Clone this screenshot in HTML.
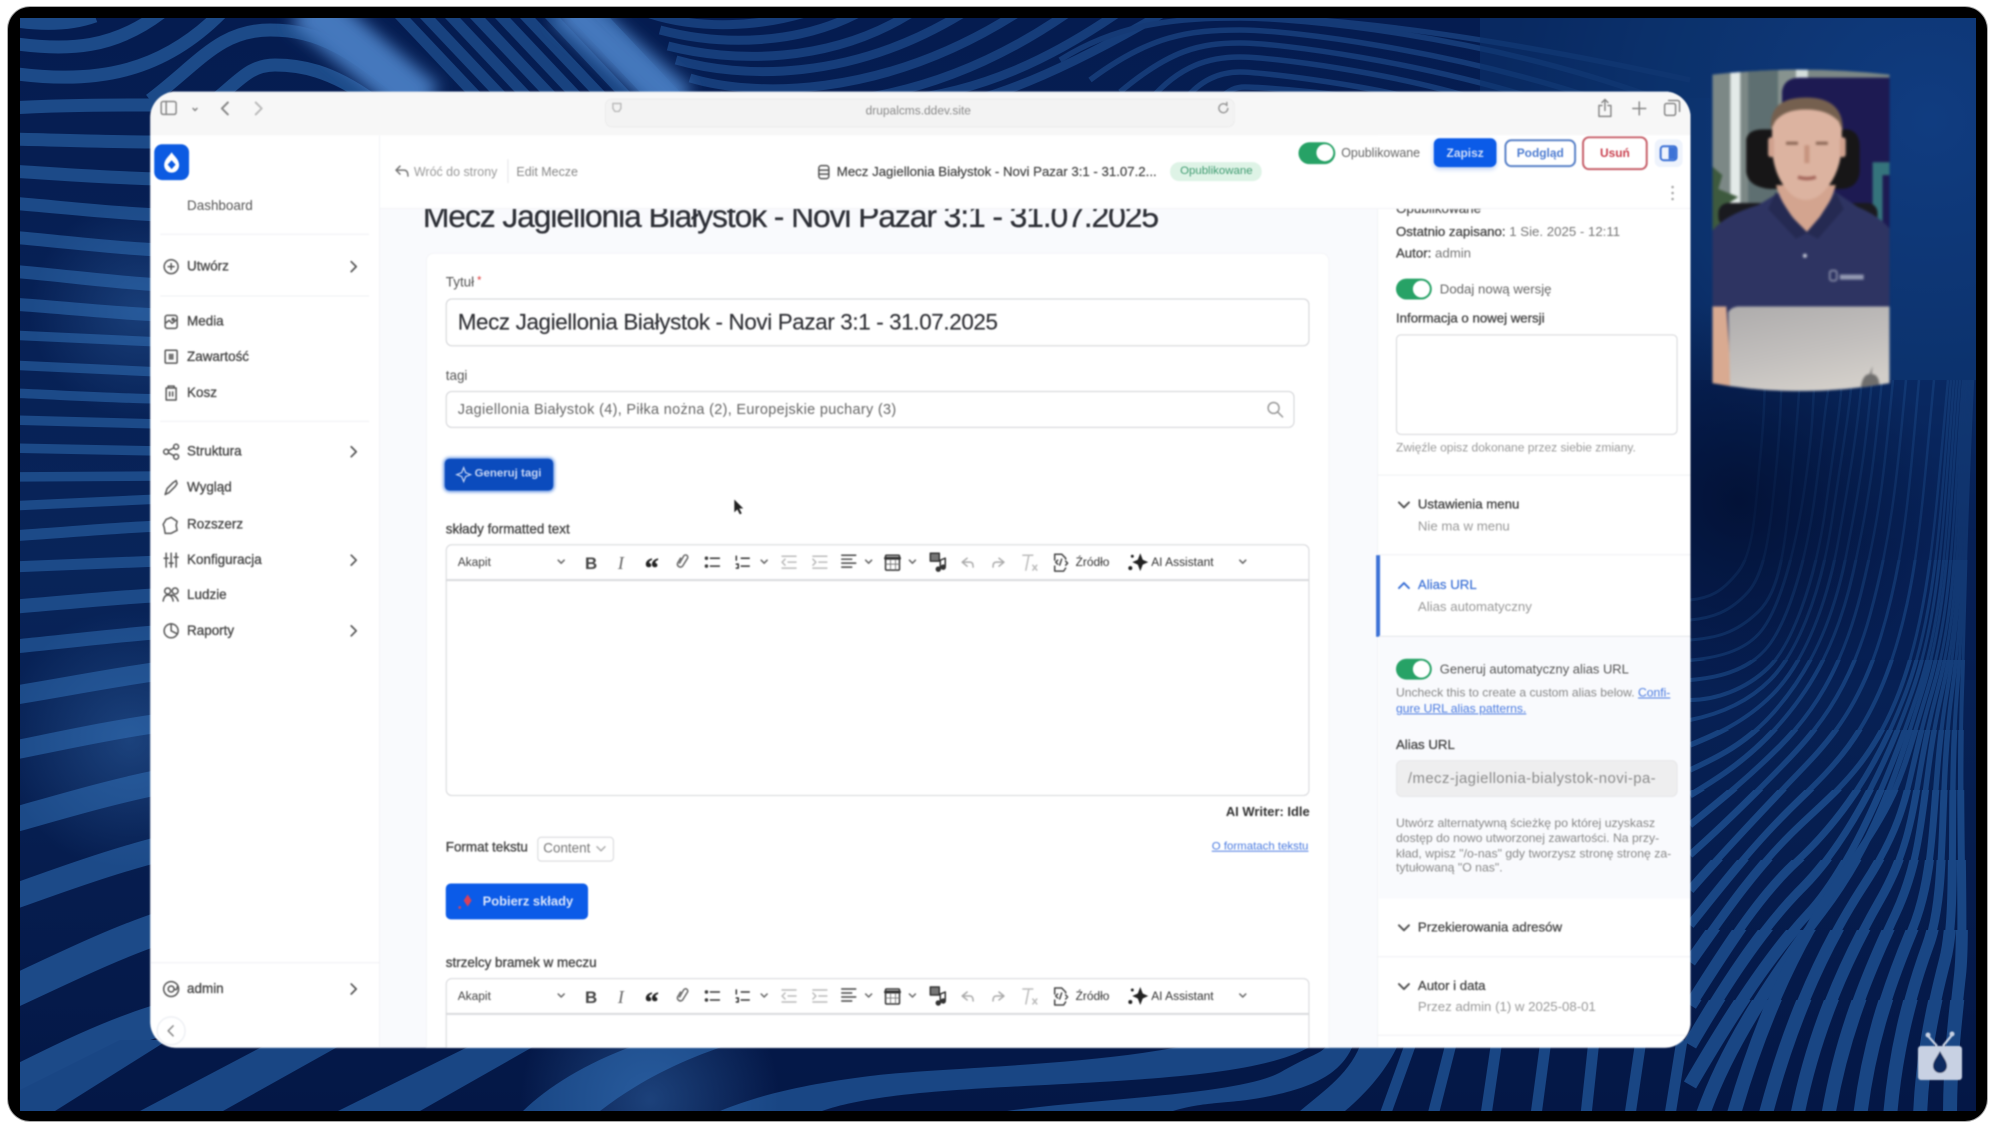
<!DOCTYPE html>
<html lang="pl"><head><meta charset="utf-8"><title>Drupal CMS</title>
<style>
html,body{margin:0;padding:0;width:1999px;height:1134px;background:#fff;overflow:hidden}
body{font-family:"Liberation Sans",sans-serif;position:relative}
.abs{position:absolute}
.frame{position:absolute;left:8px;top:7px;width:1979px;height:1114px;background:#000;border-radius:22px;box-shadow:0 0 0 1px #aaa}
#wrap{position:absolute;left:0;top:0;width:1999px;height:1134px;transform:scale(.995);transform-origin:0 0}
#win{position:absolute;left:151px;top:92px;width:1548px;height:961px;border-radius:26px;overflow:hidden;background:#fff;filter:blur(.7px)}
.c{position:absolute;left:-151px;top:-92px;width:1999px;height:1134px}
.t{position:absolute;line-height:20px;white-space:nowrap;font-size:13.500px;color:#444}
.b{font-weight:bold}
.g{color:#888}
.box{position:absolute;box-sizing:border-box}
.lab{color:#444;font-size:13.500px;-webkit-text-stroke:.3px #444}
.hr{position:absolute;height:1px;background:#eff0f3}
.tog{position:absolute;width:36px;height:21px;border-radius:11px;background:#27a266}
.tog:after{content:"";position:absolute;right:2px;top:2px;width:17px;height:17px;border-radius:50%;background:#fff}
.s{fill:none;stroke:#555;stroke-width:1.5;stroke-linecap:round;stroke-linejoin:round}
</style></head><body>
<div class="frame"></div>
<svg class="abs" style="left:20px;top:18px" width="1956" height="1093" viewBox="20 18 1956 1093">
<defs>
<linearGradient id="bg" x1="0" y1="0" x2="0" y2="1"><stop offset="0" stop-color="#051c50"/><stop offset=".5" stop-color="#082459"/><stop offset="1" stop-color="#041746"/></linearGradient>
<radialGradient id="gr" cx="1930" cy="120" r="430" gradientUnits="userSpaceOnUse"><stop offset="0" stop-color="#103c80"/><stop offset=".6" stop-color="#0c326d"/><stop offset="1" stop-color="#0c326d" stop-opacity="0"/></radialGradient>
<radialGradient id="gl1" cx="140" cy="310" r="110" gradientUnits="userSpaceOnUse"><stop offset="0" stop-color="#3a75bb" stop-opacity=".35"/><stop offset="1" stop-color="#3a75bb" stop-opacity="0"/></radialGradient>
<radialGradient id="gl2" cx="130" cy="740" r="130" gradientUnits="userSpaceOnUse"><stop offset="0" stop-color="#3a75bb" stop-opacity=".4"/><stop offset="1" stop-color="#3a75bb" stop-opacity="0"/></radialGradient>
<radialGradient id="gl3" cx="650" cy="1100" r="130" gradientUnits="userSpaceOnUse"><stop offset="0" stop-color="#3a75bb" stop-opacity=".45"/><stop offset="1" stop-color="#3a75bb" stop-opacity="0"/></radialGradient>
<radialGradient id="dk" cx="1740" cy="500" r="200" gradientUnits="userSpaceOnUse"><stop offset="0" stop-color="#020f30" stop-opacity=".8"/><stop offset="1" stop-color="#020f30" stop-opacity="0"/></radialGradient>
<filter id="sb" x="-30%" y="-30%" width="160%" height="160%"><feGaussianBlur stdDeviation="8"/></filter>
<filter id="sb1"><feGaussianBlur stdDeviation=".8"/></filter>
<g id="fam">
<path d="M1690 1085C1722 1030 1765 960 1808 914S1890 776 1918 692S1946 520 1957 380"/>
<path d="M1690 1045C1722 990 1760 930 1802 888S1883 774 1912 692S1943 520 1954 380"/>
<path d="M1690 1005C1721 957 1755 900 1796 862S1876 772 1906 692S1940 520 1951 380"/>
<path d="M1690 962C1720 920 1750 875 1790 835S1870 770 1900 690S1935 520 1948 380"/>
<path d="M1690 925C1719 889 1749 850 1787 812S1862 745 1890 665S1922 505 1934 380"/>
<path d="M1690 890C1718 858 1748 826 1784 788S1855 720 1880 639S1909 490 1919 380"/>
<path d="M1690 855C1718 830 1748 801 1781 767S1848 695 1870 615S1897 476 1906 380"/>
<path d="M1690 825C1717 803 1747 779 1779 747S1841 673 1861 593S1885 463 1893 380"/>
<path d="M1690 795C1717 779 1747 760 1776 728S1835 653 1853 573S1875 451 1882 380"/>
<path d="M1690 770C1716 758 1746 744 1774 712S1830 636 1846 556S1866 441 1872 380"/>
<path d="M1690 745C1715 735 1745 722 1772 695S1825 617 1839 537S1857 430 1862 380"/>
<path d="M1690 720C1715 715 1745 705 1770 680S1820 600 1832 520S1848 420 1852 380"/>
<path d="M1690 700C1715 700 1745 690 1768 668S1815 585 1826 505S1840 410 1842 380"/>
<path d="M1690 680C1715 678 1745 672 1765 650S1805 570 1815 495S1825 405 1830 380"/>
<path d="M1690 660C1715 658 1745 652 1762 630S1795 555 1805 485S1812 400 1815 380"/>
<path d="M1690 640C1715 638 1735 634 1758 612S1785 545 1792 475S1798 400 1800 380"/>
<path d="M1690 620C1712 618 1730 612 1748 592S1770 530 1776 470S1780 400 1782 380"/>
<path d="M1690 600C1710 598 1722 592 1738 572S1755 510 1760 460S1764 400 1765 380"/>
<path d="M1702 1117C1725 1050 1770 980 1822 912S1895 778 1922 692S1949 520 1960 380"/>
<path d="M1733 1117C1755 1040 1790 950 1845 872S1900 780 1927 692S1952 520 1963 380"/>
<path d="M1765 1117C1785 1040 1815 960 1864 885S1905 782 1932 692S1954 520 1965 380"/>
<path d="M1797 1117C1812 1040 1840 970 1880 900S1912 784 1937 692S1956 520 1967 380"/>
<path d="M1828 1117C1840 1045 1862 985 1895 915S1920 786 1942 692S1958 520 1969 380"/>
<path d="M1860 1117C1868 1050 1885 995 1912 930S1930 790 1947 692S1960 520 1970 380"/>
<path d="M1890 1117C1895 1055 1908 1000 1928 945S1938 795 1952 692S1962 520 1971 380"/>
<path d="M1920 1117C1922 1060 1932 1010 1945 960S1948 800 1957 692S1964 520 1972 380"/>
<path d="M1950 1117C1950 1060 1955 1020 1960 975S1958 810 1962 692S1966 520 1973 380"/>
</g>
<clipPath id="b1"><rect x="1600" y="1000" width="400" height="134"/></clipPath>
<clipPath id="b2"><rect x="1600" y="930" width="400" height="70"/></clipPath>
<clipPath id="b3"><rect x="1600" y="860" width="400" height="70"/></clipPath>
<clipPath id="b4"><rect x="1600" y="790" width="400" height="70"/></clipPath>
<clipPath id="b5"><rect x="1600" y="730" width="400" height="60"/></clipPath>
<clipPath id="b6"><rect x="1600" y="660" width="400" height="70"/></clipPath>
<clipPath id="b7"><rect x="1600" y="560" width="400" height="100"/></clipPath>
<clipPath id="b8"><rect x="1600" y="360" width="400" height="200"/></clipPath>
</defs>
<rect x="20" y="18" width="1956" height="1093" fill="url(#bg)"/>
<rect x="1500" y="18" width="480" height="640" fill="url(#gr)"/>
<rect x="1690" y="380" width="290" height="300" fill="#051a4c" opacity=".35"/>
<!-- left column -->
<g fill="none" stroke="#1c4a88">
<g stroke-width="13">
<path d="M10 108C60 105 110 105 160 105"/><path d="M10 139C60 140 110 142 160 142"/><path d="M10 171C60 174 110 178 160 179"/><path d="M10 203C60 207 110 213 160 215"/><path d="M10 237C60 241 110 248 160 250"/><path d="M10 271C60 275 110 282 160 285"/><path d="M10 304C60 307 110 313 160 315"/>
</g>
<g stroke-width="9.500">
<path d="M10 335C60 337 110 340 160 342"/><path d="M10 365C60 367 110 370 160 372"/><path d="M10 393C60 395 110 398 160 399"/><path d="M10 420C60 421 110 423 160 424"/><path d="M10 448C60 449 110 450 160 451"/><path d="M10 477C60 477 110 476 160 476"/><path d="M10 506C60 504 110 501 160 499"/>
</g>
<g stroke-width="11"><path d="M10 536C60 533 110 528 160 526"/><path d="M10 567C60 565 110 563 160 561"/></g>
<g stroke-width="14"><path d="M10 607C60 603 110 598 160 595"/><path d="M10 647C60 642 110 636 160 632"/></g>
<g stroke-width="19"><path d="M10 696C60 688 110 678 160 671"/><path d="M10 751C60 741 110 730 160 723"/></g>
<g stroke-width="25"><path d="M10 821C60 807 110 792 160 782"/><path d="M10 898C60 880 110 862 160 849"/></g>
<g stroke-width="32"><path d="M10 993C60 970 110 945 160 928"/><path d="M10 1085C60 1060 110 1035 160 1020"/></g>
<!-- top left waves -->
<g stroke-width="13">
<path d="M10 20C40 25 70 25 95 16"/><path d="M10 43C70 52 115 48 162 12"/><path d="M10 73C100 86 165 70 222 12"/>
<path d="M150 100C200 62 220 30 270 30S350 50 412 100"/><path d="M215 100C240 80 250 65 275 65S330 70 372 100"/>
</g>
<!-- diagonal stripes -->
<g stroke-width="11" stroke="#18427f">
<path d="M395 10L480 100"/><path d="M420 10L505 100"/><path d="M445 10L530 100"/><path d="M470 10L555 100"/><path d="M495 10L580 100"/><path d="M520 10L605 100"/><path d="M545 10L630 100"/><path d="M570 10L655 100"/><path d="M595 10L680 100"/>
</g>
<!-- bowls -->
<g stroke-width="9" stroke="#163d7a">
<path d="M650 14C700 30 760 27 808 12"/><path d="M660 30C720 46 800 46 864 10"/><path d="M668 46C730 62 830 66 916 10"/><path d="M676 60C740 78 850 84 968 10"/><path d="M690 78C750 96 880 102 1022 10"/><path d="M720 96C800 112 930 110 1072 10"/>
<path d="M900 100C980 92 1050 60 1122 10"/><path d="M975 100C1030 85 1100 50 1168 10"/>
</g>
<g stroke-width="5.500" stroke="#153a76">
<path d="M1060 60C1120 22 1180 18 1240 18S1480 35 1650 96"/>
<path d="M1090 80C1150 35 1190 30 1240 30S1450 50 1600 100"/>
<path d="M1120 92C1170 50 1200 43 1240 43S1420 62 1540 100"/>
<path d="M1150 100C1180 65 1210 57 1240 57S1390 72 1480 100"/>
<path d="M1185 100C1200 80 1220 72 1240 72S1360 84 1420 100"/>
<path d="M1220 98C1230 90 1235 87 1245 87S1330 92 1370 100"/>
<path d="M1200 18C1300 12 1460 30 1690 80"/>
</g>
</g>
<rect x="1480" y="18" width="230" height="80" fill="#0c326d" opacity=".6"/>
<!-- bottom band -->
<g fill="#194684">
<path d="M20 1090V1111H55L168 1040H120Z"/>
<path d="M140 1111H223L350 1040H275Z"/>
<path d="M338 1111H420L545 1040H482Z"/>
<path d="M523 1111H600C640 1080 690 1055 745 1040H650C590 1060 550 1085 523 1111Z"/>
<path d="M720 1111C760 1095 800 1085 870 1076S1110 1066 1210 1040H1320C1285 1068 1200 1076 1100 1082S880 1090 822 1111Z"/>
<path d="M1007 1111C1100 1098 1240 1095 1281 1072S1322 1055 1330 1040H1355C1345 1070 1320 1085 1275 1095S1210 1100 1173 1111Z"/>
<path d="M1300 1111H1345C1370 1090 1390 1065 1400 1040H1362C1352 1072 1325 1090 1300 1111Z"/>
</g>
<g fill="none" stroke="#194684" stroke-width="11"><path d="M1385 1115L1412 1040"/><path d="M1433 1115L1452 1040"/><path d="M1486 1115L1497 1040"/><path d="M1536 1115L1546 1040"/><path d="M1586 1115L1594 1040"/><path d="M1630 1115L1641 1040"/><path d="M1670 1115L1682 1040"/></g>
<!-- right family -->
<g fill="none" stroke="#194684">
<use href="#fam" stroke-width="14" clip-path="url(#b1)"/><use href="#fam" stroke-width="12" clip-path="url(#b2)"/><use href="#fam" stroke-width="9" clip-path="url(#b3)"/><use href="#fam" stroke-width="7" clip-path="url(#b4)"/><use href="#fam" stroke-width="5.500" clip-path="url(#b5)" opacity=".9"/><use href="#fam" stroke-width="4" clip-path="url(#b6)" opacity=".8"/><use href="#fam" stroke-width="3" clip-path="url(#b7)" opacity=".65"/><use href="#fam" stroke-width="2.500" clip-path="url(#b8)" opacity=".5"/>
</g>
<rect x="1540" y="300" width="400" height="400" fill="url(#dk)"/>
<!-- highlights -->
<g filter="url(#sb)" fill="none" stroke="#4478bd">
<path d="M305 5L425 105" stroke-width="48"/><path d="M565 5L680 105" stroke-width="40"/>
</g>
<rect x="20" y="200" width="140" height="220" fill="url(#gl1)"/>
<rect x="20" y="600" width="140" height="280" fill="url(#gl2)"/>
<rect x="500" y="1040" width="320" height="71" fill="url(#gl3)"/>
<g transform="translate(1940 1063)" filter="url(#sb1)">
<rect x="-22" y="-17" width="44" height="34" rx="3" fill="#c8d1e3"/>
<path d="M-3-17L-12-27M3-17L12-28" stroke="#c8d1e3" stroke-width="2.200" fill="none"/><circle cx="-12" cy="-28" r="2.500" fill="#c8d1e3"/><circle cx="12" cy="-29" r="2.500" fill="#c8d1e3"/>
<path d="M0-12C3-6 7-2 7 3A7 7 0 0 1-7 3C-7-2-3-6 0-12Z" fill="#0d2a5e"/>
</g>
</svg>

<div id="wrap">
<!-- webcam -->
<svg class="abs" style="left:1717px;top:68px;filter:blur(1.300px)" width="187" height="328" viewBox="0 0 187 328">
<defs><clipPath id="cam"><path d="M4 7Q90-3 182 7V317Q90 333 4 317Z"/></clipPath>
<linearGradient id="lap" x1="0" y1="0" x2=".4" y2="1"><stop offset="0" stop-color="#aeacac"/><stop offset=".6" stop-color="#c2bfbd"/><stop offset="1" stop-color="#d2cec9"/></linearGradient></defs>
<g clip-path="url(#cam)">
<rect width="187" height="328" fill="#7c8886"/>
<rect x="22" width="10" height="150" fill="#e3eae8"/><rect x="40" width="30" height="150" fill="#5e6f71"/><rect x="70" width="22" height="150" fill="#87938f"/><rect x="88" width="12" height="30" fill="#d5dedc"/>
<path d="M74 24Q76 10 92 10H187V230H74Z" fill="#1d1a52"/>
<rect x="165" y="95" width="22" height="120" fill="#35747c"/><rect x="175" y="108" width="12" height="100" fill="#1d1a52"/>
<path d="M38 72Q40 62 55 62H140Q152 64 152 80V105Q150 122 132 122H62Q40 120 38 105Z" fill="#171617"/>
<path d="M0 96L14 108 10 122 30 130 14 140 20 165 0 165Z" fill="#3e5a3e"/>
<rect x="10" y="136" width="160" height="24" rx="10" fill="#1a1a1f"/>
<path d="M0 170Q10 150 50 138L72 125H128L150 140Q175 150 187 168V328H0Z" fill="#2e3462"/>
<path d="M68 118Q74 142 99 166Q122 142 128 118Z" fill="#d3a48f"/>
<path d="M68 125L60 142 88 172 99 166 110 172 136 142 128 125 112 150 99 165 84 150Z" fill="#252a52"/>
<path d="M64 58Q62 34 98 33Q133 33 134 60V82Q131 112 112 128Q98 138 84 128Q66 112 64 82Z" fill="#dcb3a0"/>
<path d="M63 62Q60 30 98 30Q136 30 135 64L131 54Q120 42 98 42Q76 42 67 54Z" fill="#75604f"/>
<rect x="60" y="70" width="6" height="20" rx="3" fill="#d0a18e"/><rect x="132" y="70" width="6" height="20" rx="3" fill="#d0a18e"/>
<path d="M78 76H90M108 76H120" stroke="#8a6655" stroke-width="3"/><path d="M99 78V96" stroke="#c6947f" stroke-width="5"/><path d="M90 110Q99 113 108 110" stroke="#a5675c" stroke-width="3.500" fill="none"/>
<circle cx="97" cy="189" r="2" fill="#c9cdda"/>
<rect x="122" y="204" width="7" height="10" rx="2" fill="none" stroke="#c9cdda"/><rect x="132" y="208" width="24" height="5" fill="#aeb4c8" opacity=".8"/>
<path d="M0 240H18L24 328H0Z" fill="#d9aa91"/>
<path d="M20 246Q22 241 30 240H187V328H22Z" fill="url(#lap)"/>
<path d="M153 322Q155 308 162 308L165 300 164 308Q172 308 172 322Z" fill="#6f6e6d"/>
</g></svg>

<div id="win"><div class="c">
<!-- browser toolbar -->
<div class="box" style="left:151px;top:92px;width:1548px;height:44px;background:#f7f7f7;border-top:1px solid #dfe6f0"></div>
<div class="box" style="left:608px;top:99px;width:633px;height:29px;background:#f3f3f3;border:1px solid #ececec;border-radius:7px"></div>
<div class="t" style="left:870px;top:101px;font-size:12px;color:#8a8a8a">drupalcms.ddev.site</div>
<svg class="abs" style="left:151px;top:92px" width="1548" height="44">
<g class="s" style="stroke:#888"><rect x="11" y="10" width="15" height="13" rx="2"/><path d="M16 10V23"/><path d="M43 17l2 2 2-2"/><path d="M78 11l-6 6 6 6" stroke-width="2"/><path d="M106 11l6 6-6 6" style="stroke:#bbb" stroke-width="2"/>
<path d="M465 12h8v5l-2 3h-4l-2-3z" style="stroke:#bbb"/><path d="M1083 17a4.500 4.500 0 1 1-2-4l1 1v-3" style="stroke:#999"/>
<path d="M1459 14h-3v11h12V14h-3M1462 8v11M1459 11l3-3 3 3"/><path d="M1490 17h13M1496.500 10.500v13"/><rect x="1522" y="12" width="11" height="12" rx="2"/><path d="M1526 9h9a2 2 0 0 1 2 2v9"/></g></svg>
<!-- sidebar -->
<div class="box" style="left:151px;top:136px;width:231px;height:917px;background:#fff;border-right:1px solid #f0f1f5"></div>
<div class="box" style="left:155px;top:145px;width:35px;height:36px;background:#0c5be2;border-radius:8px"></div>
<svg class="abs" style="left:155px;top:145px" width="35" height="36"><path d="M17.500 8C20 12 25 15 25 21A7.500 7.500 0 0 1 10 21C10 15 15 12 17.500 8Z" fill="#fff"/><path d="M17.500 16l4 4.500-4 4.500-4-4.500z" fill="#0c5be2"/></svg>
<div class="t" style="left:188px;top:197px;color:#555">Dashboard</div>
<div class="hr" style="left:161px;top:235px;width:210px"></div><div class="hr" style="left:161px;top:297px;width:210px"></div><div class="hr" style="left:161px;top:423px;width:210px"></div><div class="hr" style="left:151px;top:967px;width:231px"></div>
<div class="t lab" style="left:188px;top:258px">Utwórz</div><div class="t lab" style="left:188px;top:313px">Media</div><div class="t lab" style="left:188px;top:349px">Zawartość</div><div class="t lab" style="left:188px;top:385px">Kosz</div><div class="t lab" style="left:188px;top:444px">Struktura</div><div class="t lab" style="left:188px;top:480px">Wygląd</div><div class="t lab" style="left:188px;top:517px">Rozszerz</div><div class="t lab" style="left:188px;top:553px">Konfiguracja</div><div class="t lab" style="left:188px;top:588px">Ludzie</div><div class="t lab" style="left:188px;top:624px">Raporty</div><div class="t lab" style="left:188px;top:984px">admin</div>
<svg class="abs" style="left:151px;top:92px;width:231px;height:961px" viewBox="151 92 231 961">
<g class="s">
<circle cx="172" cy="268" r="7"/><path d="M172 265v6M169 268h6"/>
<rect x="166" y="317" width="12" height="13" rx="2"/><path d="M166 325l4-3 3 3 5-4"/><circle cx="174" cy="321" r="1"/>
<rect x="166" y="352" width="12" height="13" rx="1"/><rect x="169.500" y="355.500" width="5" height="6" fill="#777" style="stroke:none"/>
<path d="M167 390h10v12h-10zM169 390v-2h6v2M170.500 394v4M173.500 394v4"/>
<circle cx="167" cy="454" r="2.500"/><circle cx="177" cy="449" r="2.500"/><circle cx="177" cy="459" r="2.500"/><path d="M169 453l6-3M169 455l6 3"/>
<path d="M166 497l2-6 6-6 3-2 1 3-2 3-6 6z"/>
<path d="M172 520l6 4-1 4 1 5-6 3h-6l-1-6-1-3 3-5z"/>
<path d="M167 556v14M172 556v14M177 556v14"/><path d="M165 561h4M170 566h4M175 560h4"/>
<circle cx="168.500" cy="594" r="3"/><circle cx="176" cy="594" r="3"/><path d="M164 604q1-6 5-6t5 6M172 598q5 0 7 6"/>
<circle cx="172" cy="634" r="7"/><path d="M172 634v-7M172 634l6 3"/>
<circle cx="172" cy="994" r="7.500"/><circle cx="172" cy="994" r="3"/><path d="M175 994q3 2 3-2"/>
<path d="M353 263l5 5-5 5M353 449l5 5-5 5M353 558l5 5-5 5M353 629l5 5-5 5M353 989l5 5-5 5" stroke-width="1.700"/>
<circle cx="172" cy="1036" r="14" style="stroke:#eef0f4" fill="#fff"/><path d="M174 1031l-5 5 5 5" style="stroke:#888"/>
</g></svg>
<!-- main -->
<div class="box" style="left:382px;top:136px;width:1002px;height:917px;background:#f9fafd"></div>
<div class="t" style="left:425px;top:197px;font-size:32px;line-height:40px;letter-spacing:-1.100px;color:#2d2f36;-webkit-text-stroke:.3px #2d2f36">Mecz Jagiellonia Białystok - Novi Pazar 3:1 - 31.07.2025</div>
<div class="box" style="left:428px;top:254px;width:908px;height:810px;background:#fff;border-radius:8px;border:1px solid #f3f4f7"></div>
<div class="t" style="left:448px;top:272px;color:#555">Tytuł<span style="color:#d33;font-size:11px;vertical-align:3px"> *</span></div>
<div class="box" style="left:448px;top:300px;width:868px;height:48px;border:1.500px solid #d2d3d6;border-radius:6px;background:#fff"></div>
<div class="t" style="left:460px;top:314px;font-size:22.500px;color:#303136;letter-spacing:-.36px;-webkit-text-stroke:.15px #303136">Mecz Jagiellonia Białystok - Novi Pazar 3:1 - 31.07.2025</div>
<div class="t" style="left:448px;top:368px;color:#555">tagi</div>
<div class="box" style="left:448px;top:393px;width:853px;height:37px;border:1.500px solid #d2d3d6;border-radius:6px;background:#fff"></div>
<div class="t" style="left:460px;top:402px;font-size:14.500px;color:#666;letter-spacing:.34px">Jagiellonia Białystok (4), Piłka nożna (2), Europejskie puchary (3)</div>
<svg class="abs" style="left:1272px;top:402px" width="20" height="20"><g class="s" style="stroke:#999"><circle cx="8" cy="8" r="5.500"/><path d="M12 12l5 5"/></g></svg>
<div class="box" style="left:447px;top:461px;width:109px;height:32px;background:#0b4bbd;border-radius:5px;box-shadow:0 0 3px 1px #5c8ee0"></div>
<div class="t b" style="left:477px;top:466px;font-size:11.500px;color:#c8d6f4">Generuj tagi</div>
<svg class="abs" style="left:457px;top:467px" width="18" height="20"><path d="M9 3l2 5 5 2-5 2-2 5-2-5-5-2 5-2z" fill="none" stroke="#c8d6f4" stroke-width="1.200"/></svg>
<div class="t lab" style="left:448px;top:522px">składy formatted text</div>
<div class="box" style="left:448px;top:547px;width:868px;height:253px;border:1.500px solid #d6d7da;border-radius:6px;background:#fff"></div>
<div class="hr" style="left:448px;top:582px;width:868px;background:#d9dadd;height:1.500px"></div>
<div class="t" style="left:460px;top:555px;font-size:12px;color:#444">Akapit</div>
<div class="t" style="left:1081px;top:555px;font-size:12px;color:#333">Źródło</div><div class="t" style="left:1157px;top:555px;font-size:12px;color:#333">AI Assistant</div>
<svg class="abs" style="left:448px;top:547px" width="868" height="36"><use href="#tb"/></svg>
<div class="t b" style="left:1232px;top:806px;font-size:13px;color:#333;width:83px;text-align:right">AI Writer: Idle</div>
<div class="t lab" style="left:448px;top:842px;-webkit-text-stroke:.35px #4a4a4a">Format tekstu</div>
<div class="box" style="left:540px;top:841px;width:77px;height:25px;border:1px solid #d5d6d9;border-radius:4px"></div>
<div class="t" style="left:546px;top:843px;font-size:13.500px;color:#777">Content</div>
<svg class="abs" style="left:599px;top:849px" width="12" height="10"><path class="s" style="stroke:#aaa" d="M1 2l4 4 4-4"/></svg>
<div class="t" style="left:1216px;top:841px;font-size:11.500px;width:99px;text-align:right;color:#4b7be0;text-decoration:underline">O formatach tekstu</div>
<div class="box" style="left:448px;top:888px;width:143px;height:36px;background:#0b5be8;border-radius:5px"></div>
<div class="t b" style="left:485px;top:896px;font-size:13px;color:#d7e3fb">Pobierz składy</div>
<svg class="abs" style="left:458px;top:895px" width="22" height="22"><path d="M12 4l4 6-4 6-4-6z" fill="#d8405a"/><circle cx="4" cy="17" r="1.300" fill="#d8405a"/></svg>
<div class="t lab" style="left:448px;top:958px;-webkit-text-stroke:.35px #4a4a4a">strzelcy bramek w meczu</div>
<div class="box" style="left:448px;top:983px;width:868px;height:90px;border:1.500px solid #d6d7da;border-radius:6px;background:#fff"></div>
<div class="hr" style="left:448px;top:1018px;width:868px;background:#d9dadd;height:1.500px"></div>
<div class="t" style="left:460px;top:991px;font-size:12px;color:#444">Akapit</div>
<div class="t" style="left:1081px;top:991px;font-size:12px;color:#333">Źródło</div><div class="t" style="left:1157px;top:991px;font-size:12px;color:#333">AI Assistant</div>
<svg class="abs" style="left:448px;top:983px" width="868" height="36">
<defs><g id="tb" transform="translate(-448 -547)">
<text x="588" y="572" font-family="Liberation Sans" font-weight="bold" font-size="17" fill="#444">B</text>
<text x="621" y="572" font-family="Liberation Serif" font-style="italic" font-size="18" fill="#666">I</text>
<text x="648" y="580" font-family="Liberation Serif" font-weight="bold" font-size="28" fill="#222" stroke="#222" stroke-width=".6">“</text>
<g class="s" style="stroke:#666"><path d="M684 561l-3 5a3 3 0 0 0 5 3l5-8a2.200 2.200 0 0 0-4-2l-4 7"/>
<path d="M714 561h9M714 569h9" style="stroke:#333"/><circle cx="710" cy="561" r="1" style="stroke:#333"/><circle cx="710" cy="569" r="1" style="stroke:#333"/>
<path d="M745 561h8M745 569h8M740 559v4M740 567h2v4h-2" style="stroke:#333"/><path d="M765 563l3 3 3-3M870 563l3 3 3-3M914 563l3 3 3-3M561 563l3 3 3-3M1246 563l3 3 3-3"/>
<path d="M786 559h14M792 565h8M786 571h14M789 562l-3 3 3 3" style="stroke:#bbb"/>
<path d="M817 559h14M823 565h8M817 571h14M817 562l3 3-3 3" style="stroke:#bbb"/>
<path d="M846 558h14M846 562h10M846 566h14M846 570h10" style="stroke:#444"/>
<rect x="890" y="558" width="14" height="15" rx="1" style="stroke:#333"/><path d="M890 561h14" style="stroke:#333;stroke-width:3"/><path d="M890 567h14M895 562v11M900 562v11" stroke-width=".8"/>
<rect x="935" y="556" width="9" height="8" style="stroke:#333" fill="#777"/><path d="M945 563v9M950 561v8M945 563l5-2" style="stroke:#333"/><circle cx="943" cy="572" r="2" fill="#333" style="stroke:#333"/><circle cx="948" cy="570" r="2" fill="#333" style="stroke:#333"/>
<path d="M972 561l-5 4 5 4M967 565h8q3 0 3 5" style="stroke:#aaa"/><path d="M1004 561l5 4-5 4M1009 565h-8q-3 0-3 5" style="stroke:#aaa"/>
<path d="M1028 558h10M1034 558l-3 15M1038 568l4 5M1042 568l-4 5" style="stroke:#bbb"/>
<path d="M1060 557h7l4 4v1M1060 557v6M1060 569v5h9l2-3M1071 568l2-2-2-2M1063 563l-2 2 2 2M1067 562l-2 6" style="stroke:#444"/></g>
<path d="M1146 556l2.500 6.500 5.500 2.500-5.500 2.500-2.500 6.500-2.500-6.500-5.500-2.500 5.500-2.500z" fill="#222"/><circle cx="1138" cy="559" r="1.500" fill="#222"/><circle cx="1136" cy="571" r="2" fill="#222"/>
</g></defs><use href="#tb"/></svg>
<!-- right panel -->
<div class="box" style="left:1384px;top:136px;width:315px;height:917px;background:#fff;border-left:1px solid #f0f1f5"></div>
<div class="t" style="left:1403px;top:200px;color:#555;-webkit-text-stroke:.3px #555">Opublikowane</div>
<div class="t" style="left:1403px;top:223px;font-size:13.300px"><span class="lab" style="font-size:13.300px">Ostatnio zapisano:</span> <span style="color:#777">1 Sie. 2025 - 12:11</span></div>
<div class="t" style="left:1403px;top:245px;font-size:13.300px"><span class="lab" style="font-size:13.300px">Autor:</span> <span style="color:#777">admin</span></div>
<div class="tog" style="left:1403px;top:280px"></div>
<div class="t" style="left:1447px;top:281px;color:#666;font-size:13.300px">Dodaj nową wersję</div>
<div class="t lab" style="left:1403px;top:310px;font-size:13.300px">Informacja o nowej wersji</div>
<div class="box" style="left:1403px;top:336px;width:283px;height:101px;border:1.500px solid #d5d6d9;border-radius:5px"></div>
<div class="t g" style="left:1403px;top:440px;font-size:12.100px;color:#999">Zwięźle opisz dokonane przez siebie zmiany.</div>
<div class="hr" style="left:1385px;top:477px;width:314px"></div>
<div class="t lab" style="left:1425px;top:497px;font-size:13.300px">Ustawienia menu</div>
<div class="t" style="left:1425px;top:519px;color:#999;font-size:13.300px">Nie ma w menu</div>
<div class="hr" style="left:1385px;top:557px;width:314px"></div>
<div class="box" style="left:1383px;top:558px;width:3.500px;height:82px;background:#3d72d6"></div>
<div class="t lab" style="left:1425px;top:578px;color:#3d72d6;-webkit-text-stroke:.2px #3d72d6;font-size:13.300px">Alias URL</div>
<div class="t" style="left:1425px;top:600px;color:#999;font-size:13.300px">Alias automatyczny</div>
<div class="box" style="left:1386px;top:639px;width:313px;height:264px;background:#f9fafd;border-top:1.500px solid #e4e6ea"></div>
<div class="tog" style="left:1403px;top:662px"></div>
<div class="t" style="left:1447px;top:663px;color:#555;font-size:13px">Generuj automatyczny alias URL</div>
<div class="t" style="left:1403px;top:686px;font-size:12.200px;color:#888">Uncheck this to create a custom alias below. <span style="color:#4b7be0;text-decoration:underline">Confi-</span></div>
<div class="t" style="left:1403px;top:702px;font-size:12.200px;color:#4b7be0;text-decoration:underline">gure URL alias patterns.</div>
<div class="t lab" style="left:1403px;top:739px;-webkit-text-stroke:.3px #4a4a4a;font-size:13.300px">Alias URL</div>
<div class="box" style="left:1403px;top:764px;width:283px;height:37px;background:#eeeeef;border:1px solid #e6e6e8;border-radius:6px;overflow:hidden">
<div class="t" style="left:11px;top:8px;font-size:15px;color:#8a8a8a;letter-spacing:.42px">/mecz-jagiellonia-bialystok-novi-pa-</div><div class="t" style="left:11px;top:31px;font-size:15px;color:#8a8a8a;letter-spacing:.42px">zar-31-31072025</div></div>
<div class="t" style="left:1403px;top:817px;font-size:12.300px;color:#888">Utwórz alternatywną ścieżkę po której uzyskasz</div>
<div class="t" style="left:1403px;top:832px;font-size:12.300px;color:#888">dostęp do nowo utworzonej zawartości. Na przy-</div>
<div class="t" style="left:1403px;top:848px;font-size:12.300px;color:#888">kład, wpisz "/o-nas" gdy tworzysz stronę stronę za-</div>
<div class="t" style="left:1403px;top:862px;font-size:12.300px;color:#888">tytułowaną "O nas".</div>
<div class="t lab" style="left:1425px;top:922px;-webkit-text-stroke:.3px #4a4a4a;font-size:13.300px">Przekierowania adresów</div>
<div class="hr" style="left:1385px;top:961px;width:314px"></div>
<div class="t lab" style="left:1425px;top:981px;-webkit-text-stroke:.3px #4a4a4a;font-size:13.300px">Autor i data</div>
<div class="t" style="left:1425px;top:1002px;color:#999;font-size:13.300px">Przez admin (1) w 2025-08-01</div>
<div class="hr" style="left:1385px;top:1040px;width:314px"></div>
<svg class="abs" style="left:1400px;top:500px" width="24" height="500" viewBox="1400 500 24 500"><g class="s" style="stroke-width:2"><path d="M1406 505l5 5 5-5M1406 930l5 5 5-5M1406 989l5 5 5-5"/><path d="M1406 591l5-5 5 5" style="stroke:#3d72d6"/></g></svg>
<!-- header -->
<div class="box" style="left:382px;top:136px;width:1317px;height:74px;background:#fff;border-bottom:1px solid #f2f3f6"></div>
<svg class="abs" style="left:396px;top:164px" width="18" height="18"><path class="s" style="stroke:#777" d="M6 3L2 7l4 4M2 7h8q4 0 4 6"/></svg>
<div class="t" style="left:416px;top:163px;font-size:12.500px;color:#999">Wróć do strony</div>
<div class="box" style="left:510px;top:160px;width:1px;height:24px;background:#e5e6e9"></div>
<div class="t" style="left:519px;top:163px;font-size:12.500px;color:#888">Edit Mecze</div>
<svg class="abs" style="left:820px;top:164px" width="16" height="18"><g class="s" style="stroke:#555"><rect x="3" y="2.500" width="10" height="13" rx="2.500"/><path d="M3 7h10M3 11h10"/></g></svg>
<div class="t" style="left:841px;top:163px;font-size:13.300px;color:#3c3c3c;-webkit-text-stroke:.15px #3c3c3c">Mecz Jagiellonia Białystok - Novi Pazar 3:1 - 31.07.2...</div>
<div class="box" style="left:1176px;top:163px;width:92px;height:19px;background:#def3e6;border-radius:9px"></div>
<div class="t" style="left:1186px;top:162px;font-size:11.500px;color:#3f9a70">Opublikowane</div>
<div class="tog" style="left:1305px;top:143px;width:37px;height:22px;border-radius:11px"></div>
<div class="t" style="left:1348px;top:144px;font-size:12.500px;color:#666">Opublikowane</div>
<div class="box" style="left:1441px;top:139px;width:63px;height:29px;background:#0b5be8;border-radius:6px;box-shadow:0 2px 5px #bfd2f3"></div>
<div class="t b" style="left:1441px;top:144px;width:63px;text-align:center;font-size:12px;color:#cfdcf8">Zapisz</div>
<div class="box" style="left:1512px;top:140px;width:72px;height:28px;border:2px solid #5a82c8;border-radius:7px;background:#fff"></div>
<div class="t b" style="left:1512px;top:144px;width:72px;text-align:center;font-size:12px;color:#4d7cd0">Podgląd</div>
<div class="box" style="left:1590px;top:137px;width:66px;height:34px;border:2px solid #c7616b;border-radius:7px;background:#fff"></div>
<div class="t b" style="left:1590px;top:144px;width:66px;text-align:center;font-size:12px;color:#c9404f">Usuń</div>
<div class="box" style="left:1663px;top:140px;width:28px;height:28px;background:#eef3fc;border-radius:6px"></div>
<svg class="abs" style="left:1663px;top:140px" width="28" height="28"><rect x="6" y="7" width="16" height="14" rx="3" fill="none" stroke="#3d72d6" stroke-width="2"/><rect x="14" y="8" width="7" height="12" fill="#3d72d6"/></svg>
<svg class="abs" style="left:1677px;top:186px" width="8" height="16"><g fill="#aaa"><circle cx="4" cy="2" r="1.300"/><circle cx="4" cy="8" r="1.300"/><circle cx="4" cy="14" r="1.300"/></g></svg>
<svg class="abs" style="left:736px;top:500px" width="14" height="20"><path d="M2 2v13l3-3 2.500 5 2-1-2.500-5h4z" fill="#222"/></svg>
</div></div>
</div>
</body></html>
